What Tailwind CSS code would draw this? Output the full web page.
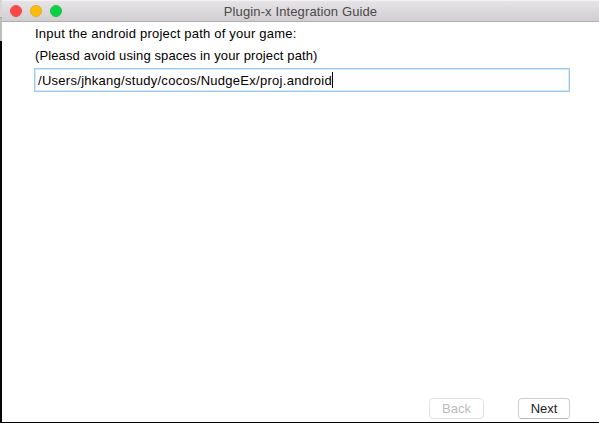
<!DOCTYPE html>
<html lang="en">
<head>
<meta charset="utf-8">
<title>Plugin-x Integration Guide</title>
<script src="https://cdn.jsdelivr.net/npm/@tailwindcss/browser@4"></script>
</head>
<body class="h-[423px] w-[599px] overflow-hidden bg-black font-['Liberation_Sans',Arial,sans-serif] text-[13px] leading-[16px] text-black">
<div class="flex h-[423px] w-[599px]">
  <div class="flex w-[2px] shrink-0 flex-col">
    <div class="h-[17px] bg-[#d6d6d6]"></div>
    <div class="h-px bg-[#a5a5a5]"></div>
    <div class="h-[23px] bg-[#bdbdbd]"></div>
    <div class="grow bg-[#050505]"></div>
  </div>
  <main class="flex h-[422px] grow flex-col overflow-hidden bg-white">
    <header class="grid h-[22px] shrink-0 grid-cols-[1fr_auto_1fr] items-center border-t border-b border-t-[#f3f1f3] border-b-[#b1afb1] bg-linear-to-b from-[#e7e4e7] to-[#d1ced1]">
      <div class="flex gap-2 pl-2">
        <span class="size-3 rounded-full border border-[#e8504f] bg-[#fc4948]"></span>
        <span class="size-3 rounded-full border border-[#e5ab22] bg-[#fdbc09]"></span>
        <span class="size-3 rounded-full border border-[#25bd45] bg-[#0ad145]"></span>
      </div>
      <h1 class="pt-px whitespace-nowrap tracking-[0.12px] text-[#4b494b]">Plugin-x Integration Guide</h1>
    </header>
    <section class="flex grow flex-col pr-[29px] pl-8">
      <p class="mt-[4px] pl-px whitespace-nowrap tracking-[0.21px]">Input the android project path of your game:</p>
      <p class="mt-[6px] pl-px whitespace-nowrap tracking-[0.12px]">(Pleasd avoid using spaces in your project path)</p>
      <div class="mt-[4px] flex h-6 items-center border border-[#a1c9e5] pl-[3px] inset-ring inset-ring-[#d0eafd]">
        <span class="pt-px whitespace-nowrap tracking-[0.28px]">/Users/jhkang/study/cocos/NudgeEx/proj.android</span>
        <span class="h-4 w-px bg-black"></span>
      </div>
    </section>
    <footer class="flex h-6 shrink-0 gap-[34px] pl-[427px]">
      <button disabled class="h-[21px] w-[55px] rounded-[4px] border border-[#e2e2e2] bg-white text-[#bcbcbc]">Back</button>
      <button class="h-[21px] w-[52px] rounded-[4px] border border-[#cfcfcf] border-b-[#b9b9b9] bg-white text-[#1c1c1c]">Next</button>
    </footer>
  </main>
</div>
</body>
</html>
